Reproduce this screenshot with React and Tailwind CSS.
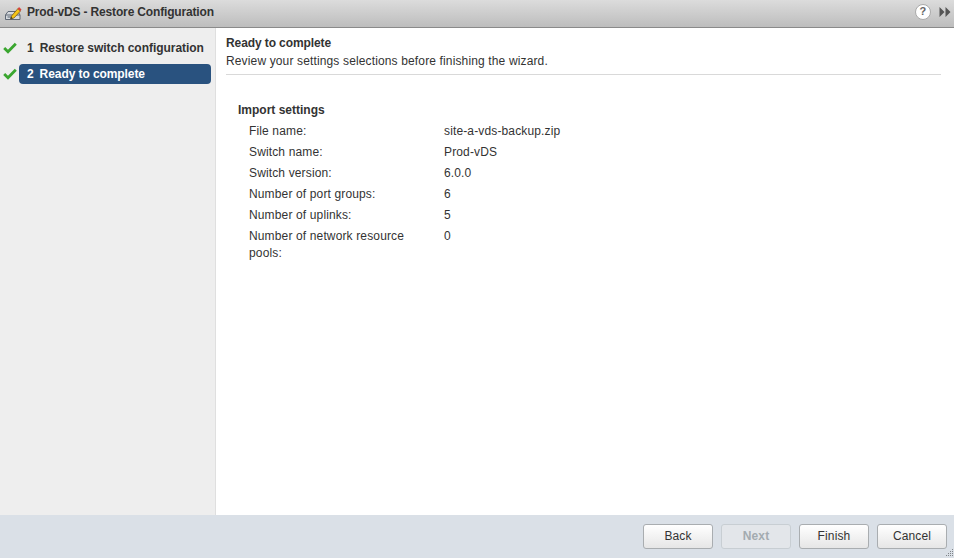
import React from 'react';

const rows = [
  ['File name:', 'site-a-vds-backup.zip'],
  ['Switch name:', 'Prod-vDS'],
  ['Switch version:', '6.0.0'],
  ['Number of port groups:', '6'],
  ['Number of uplinks:', '5'],
  ['Number of network resource pools:', '0'],
];

function Check() {
  return (
    <svg width="14" height="12" viewBox="0 0 14 12" className="shrink-0">
      <path d="M1.2 6 L5 9.8 L12.8 1.8" fill="none" stroke="#3aa62f" strokeWidth="2.8" />
    </svg>
  );
}

// switch with a pencil on top
function SwitchIcon() {
  return (
    <svg width="17" height="15" viewBox="0 0 17 15" className="mt-[3px] shrink-0">
      <path d="M0.5 9 L3 5.5 H13 L15 9 V13.5 H0.5 Z" fill="#d5d9de" stroke="#5f6875" strokeWidth="1" />
      <path d="M0.5 9 H15" stroke="#5f6875" strokeWidth="1" />
      <path d="M2.5 11 H7" stroke="#6d7784" strokeWidth="1.2" />
      <path d="M5.5 13 L6.5 10 L13 2.5 L15.5 5 L9 12 Z" fill="#f5c518" stroke="#6b4e10" strokeWidth="0.7" />
      <path d="M12.6 3 L14 1 L16.5 3.5 L15.2 5.2 Z" fill="#d8413a" />
      <path d="M5.5 13 L6.2 10.8 L7.8 12.3 Z" fill="#333" />
    </svg>
  );
}

function WizardButton({ label, disabled }) {
  return (
    <button
      className={
        disabled
          ? 'w-[70px] h-[25px] rounded-[3px] border border-[#c8ced3] bg-[#e3e6ea] text-xs font-bold text-[#a3abb0]'
          : 'w-[70px] h-[25px] rounded-[3px] border border-[#a9adb0] bg-gradient-to-b from-white to-[#e6e6e6] text-xs tracking-[0.13px] text-[#333]'
      }
    >
      {label}
    </button>
  );
}

export default function App() {
  return (
    <div className="w-[954px] h-[558px] flex flex-col bg-white overflow-hidden text-xs tracking-[0.14px] text-[#333] font-['Liberation_Sans',Arial,sans-serif]">
      {/* title bar */}
      <div className="h-[28px] shrink-0 flex items-center pl-[5px] pr-[3px] pb-[3px] bg-gradient-to-b from-[#dcdcdc] to-[#bdbdbd] border-b border-[#8a8a8a]">
        <SwitchIcon />
        <span className="ml-[5px] font-bold tracking-[-0.16px] text-[#333]">Prod-vDS - Restore Configuration</span>
        <div className="ml-auto flex items-center gap-[8px] -mt-[1px]">
          <div className="w-[16px] h-[16px] rounded-full bg-white border border-[#aaa] flex items-center justify-center text-[11px] font-bold text-[#666]">?</div>
          <svg width="12" height="10" viewBox="0 0 12 10">
            <path d="M0.5 0 L5.5 5 L0.5 10 Z M6.5 0 L11.5 5 L6.5 10 Z" fill="#555" />
          </svg>
        </div>
      </div>

      <div className="flex-1 flex min-h-0">
        {/* steps */}
        <div className="w-[216px] shrink-0 bg-[#eeeeee] border-r border-[#dfdfdf] pt-[10px]">
          <div className="flex items-center h-[20px] pl-[3px]">
            <Check />
            <div className="ml-[2px] w-[192px] pl-[8px] font-bold tracking-[-0.04px] text-[#333] whitespace-nowrap">
              <span className="mr-[6px]">1</span>Restore switch configuration
            </div>
          </div>
          <div className="flex items-center h-[20px] mt-[6px] pl-[3px]">
            <Check />
            <div className="ml-[2px] w-[192px] h-[20px] leading-[20px] pl-[8px] rounded-[4px] bg-[#29527f] font-bold tracking-[-0.08px] text-white whitespace-nowrap">
              <span className="mr-[6px]">2</span>Ready to complete
            </div>
          </div>
        </div>

        {/* content */}
        <div className="flex-1 pl-[10px] pr-[13px] pt-[8px]">
          <div className="border-b border-[#d9d9d9] h-[39px]">
            <div className="font-bold tracking-[-0.1px] leading-[14px]">Ready to complete</div>
            <div className="mt-[4px] leading-[14px]">Review your settings selections before finishing the wizard.</div>
          </div>
          <div className="pl-[12px] pt-[28px]">
            <div className="font-bold tracking-normal leading-[14px]">Import settings</div>
            <div className="mt-[3px] pl-[11px]">
              {rows.map(([label, value]) => (
                <div key={label} className="flex py-[3.5px] leading-[14px]">
                  <div className="w-[195px] pr-[30px] leading-[17px] -mt-[1px] -mb-[2px]">{label}</div>
                  <div>{value}</div>
                </div>
              ))}
            </div>
          </div>
        </div>
      </div>

      {/* footer */}
      <div className="relative h-[43px] shrink-0 bg-[#dae0e7] flex items-center justify-end gap-[8px] pr-[7px] pb-[1px]">
        <WizardButton label="Back" />
        <WizardButton label="Next" disabled />
        <WizardButton label="Finish" />
        <WizardButton label="Cancel" />
        <svg width="10" height="10" viewBox="0 0 10 10" className="absolute right-0 bottom-0">
          <path d="M8 1h1v1H8z M6 3h1v1H6z M8 3h1v1H8z M4 5h1v1H4z M6 5h1v1H6z M8 5h1v1H8z M2 7h1v1H2z M4 7h1v1H4z M6 7h1v1H6z M8 7h1v1H8z" fill="#7f8489" />
        </svg>
      </div>
    </div>
  );
}
